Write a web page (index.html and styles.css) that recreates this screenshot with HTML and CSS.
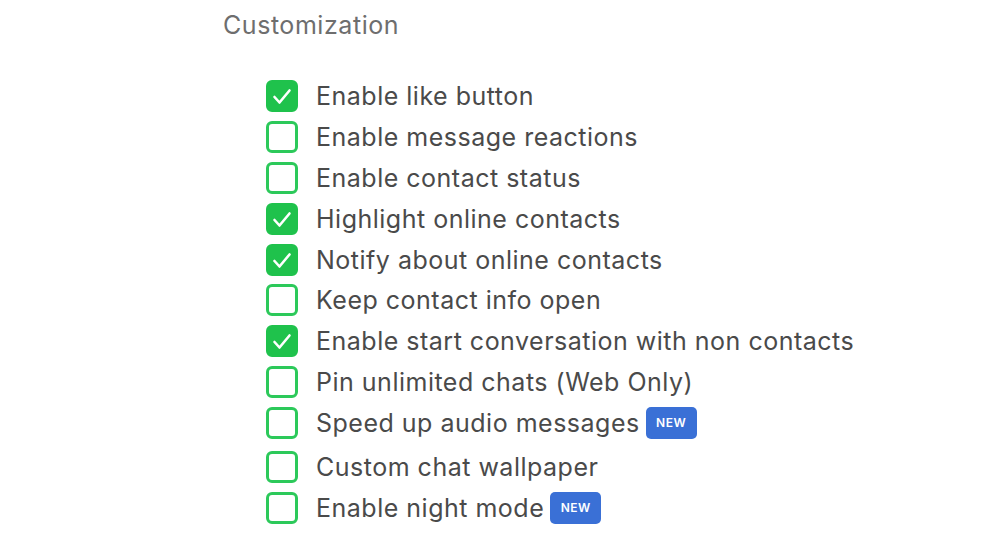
FILE: index.html
```html
<!DOCTYPE html>
<html>
<head>
<meta charset="utf-8">
<link rel="stylesheet" href="styles.css">
</head>
<body>
<div class="page">
  <h2 class="title">Customization</h2>
  <ul class="list">
    <li class="row"><span class="box on"><svg viewBox="0 0 32 32"><path d="M8.5 17 L13.5 22.5 L23.5 10.5"/></svg></span><span class="label">Enable like button</span></li>
    <li class="row"><span class="box"></span><span class="label">Enable message reactions</span></li>
    <li class="row"><span class="box"></span><span class="label">Enable contact status</span></li>
    <li class="row"><span class="box on"><svg viewBox="0 0 32 32"><path d="M8.5 17 L13.5 22.5 L23.5 10.5"/></svg></span><span class="label">Highlight online contacts</span></li>
    <li class="row"><span class="box on"><svg viewBox="0 0 32 32"><path d="M8.5 17 L13.5 22.5 L23.5 10.5"/></svg></span><span class="label">Notify about online contacts</span></li>
    <li class="row"><span class="box"></span><span class="label">Keep contact info open</span></li>
    <li class="row"><span class="box on"><svg viewBox="0 0 32 32"><path d="M8.5 17 L13.5 22.5 L23.5 10.5"/></svg></span><span class="label">Enable start conversation with non contacts</span></li>
    <li class="row"><span class="box"></span><span class="label">Pin unlimited chats (Web Only)</span></li>
    <li class="row"><span class="box"></span><span class="label">Speed up audio messages</span><span class="badge">NEW</span></li>
    <li class="row gap"><span class="box"></span><span class="label">Custom chat wallpaper</span></li>
    <li class="row"><span class="box"></span><span class="label">Enable night mode</span><span class="badge">NEW</span></li>
  </ul>
</div>
</body>
</html>
```
FILE: styles.css
```css
html, body {
  margin: 0;
  padding: 0;
  background: #ffffff;
}
.page {
  padding: 10px 0 0 223px;
  font-family: Inter, "Liberation Sans", sans-serif;
}
.title {
  margin: 0;
  font-size: 25px;
  font-weight: 400;
  line-height: 30px;
  color: #6e6e6e;
  letter-spacing: 0.55px;
}
.list {
  list-style: none;
  margin: 36px 0 0 43px;
  padding: 0;
}
.row {
  display: flex;
  align-items: center;
  height: 40.8px;
}
.row.gap {
  margin-top: 3.5px;
}
.box {
  box-sizing: border-box;
  width: 32px;
  height: 32px;
  border: 3px solid #2cc95a;
  border-radius: 6px;
  flex: none;
  display: flex;
}
.box.on {
  background: #1fc24c;
  border-color: #1fc24c;
}
.box svg {
  width: 32px;
  height: 32px;
  margin: -3px;
}
.box svg path {
  fill: none;
  stroke: #ffffff;
  stroke-width: 2.6;
  stroke-linecap: round;
  stroke-linejoin: round;
}
.label {
  margin-left: 18px;
  font-size: 25px;
  color: #4a4a4a;
  letter-spacing: 0.5px;
  white-space: nowrap;
}
.badge {
  margin-left: 6px;
  background: #3a70d6;
  color: #ffffff;
  font-size: 12px;
  font-weight: 600;
  border-radius: 5px;
  width: 51px;
  height: 32px;
  display: flex;
  align-items: center;
  justify-content: center;
  letter-spacing: 0.5px;
}
```
